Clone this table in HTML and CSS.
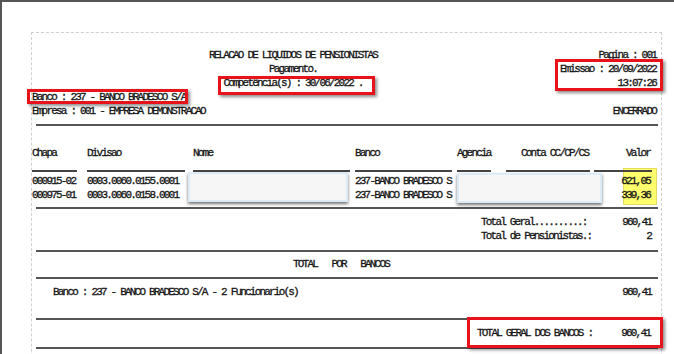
FILE: index.html
```html
<!DOCTYPE html>
<html lang="pt-BR">
<head>
<meta charset="utf-8">
<title>Relacao de Liquidos de Pensionistas</title>
<link rel="stylesheet" href="styles.css">
</head>
<body>
<div class="frame">
  <div class="sheet">
    <div class="hdr">
      <div class="hdr-center">
        <div class="ln">RELACAO DE LIQUIDOS DE PENSIONISTAS</div>
        <div class="ln">Pagamento.</div>
        <div class="ln"><span class="mark mark-comp">Competência(s) : 30/06/2022 .</span></div>
      </div>
      <div class="hdr-right">
        <div class="ln">Pagina : 001</div>
        <div class="mark mark-emis">
          <div class="ln">Emissao : 20/09/2022</div>
          <div class="ln">13:07:26</div>
        </div>
      </div>
    </div>
    <div class="ln"><span class="mark mark-banco">Banco : 237 - BANCO BRADESCO S/A</span></div>
    <div class="ln split"><span>Empresa : 001 - EMPRESA DEMONSTRACAO</span><span>ENCERRADO</span></div>
    <div class="rule r1"></div>

    <div class="tbl">
      <div class="hl-yellow"></div>
      <div class="row th">
        <span>Chapa</span><span>Divisao</span><span>Nome</span><span>Banco</span><span>Agencia</span><span class="c-conta">Conta CC/CP/CS</span><span class="c-val">Valor</span>
      </div>
      <div class="row ul">
        <i class="u1"></i><i class="u2"></i><i class="u3"></i><i class="u4"></i><i class="u5"></i><i class="u6"></i><i class="u7"></i>
      </div>
      <div class="row td">
        <span>000915-02</span><span>0003.0060.0155.0001</span><span></span><span>237-BANCO BRADESCO S</span><span></span><span></span><span class="c-val">621,05</span>
      </div>
      <div class="row td">
        <span>000975-01</span><span>0003.0060.0158.0001</span><span></span><span>237-BANCO BRADESCO S</span><span></span><span></span><span class="c-val">339,36</span>
      </div>
      <div class="redact redact-nome"></div>
      <div class="redact redact-conta"></div>
    </div>

    <div class="rule r2"></div>
    <div class="tot first"><span>Total Geral..........:</span><span>960,41</span></div>
    <div class="tot"><span>Total de Pensionistas.:</span><span>2</span></div>
    <div class="rule r3"></div>
    <div class="ln title-bancos">TOTAL   POR   BANCOS</div>
    <div class="rule r4"></div>
    <div class="ln banco-line"><span>Banco : 237 - BANCO BRADESCO S/A - 2 Funcionario(s)</span><span>960,41</span></div>
    <div class="rule r5"></div>
    <div class="grand"><span class="mark mark-grand"><span>TOTAL GERAL DOS BANCOS :</span><span>960,41</span></span></div>
    <div class="rule r6"></div>
  </div>
</div>
</body>
</html>
```

FILE: styles.css
```css
* { box-sizing: border-box; }
html, body { margin: 0; padding: 0; background: #fff; }
body {
  width: 674px;
  height: 354px;
  overflow: hidden;
  font-family: "Liberation Mono", "Courier New", monospace;
  font-size: 11px;
  letter-spacing: -1.8px;
  color: #161616;
  -webkit-text-stroke: 0.3px #161616;
  white-space: nowrap;
}
.frame {
  width: 674px;
  height: 354px;
  border-top: 2px solid #555;
  border-left: 2px solid #555;
  overflow: hidden;
}
.sheet {
  margin-left: 29px;
  margin-top: 30px;
  width: 631px;
  height: 400px;
  border: 1px dashed #cfcfcf;
  border-bottom: none;
  position: relative;
}
.ln { height: 14px; line-height: 14px; }

/* header */
.hdr {
  padding-top: 15px;
  display: grid;
  grid-template-columns: 522px 1fr;
}
.hdr-center { text-align: center; }
.hdr-right { text-align: right; padding-right: 5px; }
.split {
  display: flex;
  justify-content: space-between;
  padding-right: 5px;
}

/* red annotation boxes */
.mark { position: relative; display: inline-block; }
.mark::after {
  content: "";
  position: absolute;
  border: 3px solid #e8121a;
  box-shadow: 2px 2px 3px rgba(0,0,0,.45);
  pointer-events: none;
}
.mark-comp::after { left: -5px; right: -12px; top: 0; bottom: -5px; }
.mark-emis { text-align: right; }
.mark-emis::after { left: -5px; right: -7px; top: -3px; bottom: -1px; }
.mark-banco::after { left: -5px; right: -2px; top: -1px; bottom: 0; }
.mark-grand::after { left: -10px; right: -13px; top: -9px; bottom: -8px; }

/* rules */
.rule {
  height: 2px;
  background: #555;
  margin-left: 4px;
  margin-right: 3px;
}
.r1 { margin-top: 6px; }
.r2 { margin-top: 5px; }
.r3 { margin-top: 7px; }
.r4 { margin-top: 6px; }
.r5 { margin-top: 19px; }
.r6 { margin-top: 7px; }

/* table */
.tbl { position: relative; margin-top: 20px; }
.row {
  display: grid;
  grid-template-columns: 55px 106px 162px 102px 49px 88px 58px;
  height: 14px;
  line-height: 14px;
  position: relative;
  z-index: 1;
}
.c-conta { padding-left: 15px; }
.c-val { text-align: right; padding-right: 2px; }
.ul { height: 2px; margin-top: 10px; margin-bottom: 2px; }
.ul i { display: block; height: 2px; background: #444; }
.u1 { width: 45px; }
.u2 { width: 98px; }
.u3 { width: 157px; }
.u4 { width: 97px; }
.u5 { width: 34px; }
.u6 { width: 84px; }
.u7 { width: 58px; }

.hl-yellow {
  position: absolute;
  left: 591px;
  top: 22px;
  width: 34px;
  height: 37px;
  background: #ffff6e;
  border: 1px solid #e2dc5a;
  z-index: 0;
}
.redact {
  position: absolute;
  background: #f6f6f6;
  border: 2px solid #dcebf8;
  box-shadow: 0 2px 3px rgba(0,0,0,.55);
  z-index: 2;
}
.redact-nome { left: 156px; top: 26px; width: 160px; height: 30px; }
.redact-conta { left: 425px; top: 27px; width: 145px; height: 30px; }

/* totals */
.tot {
  display: flex;
  justify-content: space-between;
  height: 14px;
  line-height: 14px;
  padding-left: 449px;
  padding-right: 10px;
}
.tot.first { margin-top: 6px; }
.title-bancos { margin-top: 5px; padding-left: 261px; white-space: pre; }
.banco-line {
  margin-top: 6px;
  display: flex;
  justify-content: space-between;
  padding-left: 21px;
  padding-right: 10px;
}
.grand {
  margin-top: 6px;
  height: 14px;
  line-height: 14px;
  padding-left: 445px;
  padding-right: 10px;
}
.mark-grand {
  display: flex;
  justify-content: space-between;
  width: 173px;
}
```
